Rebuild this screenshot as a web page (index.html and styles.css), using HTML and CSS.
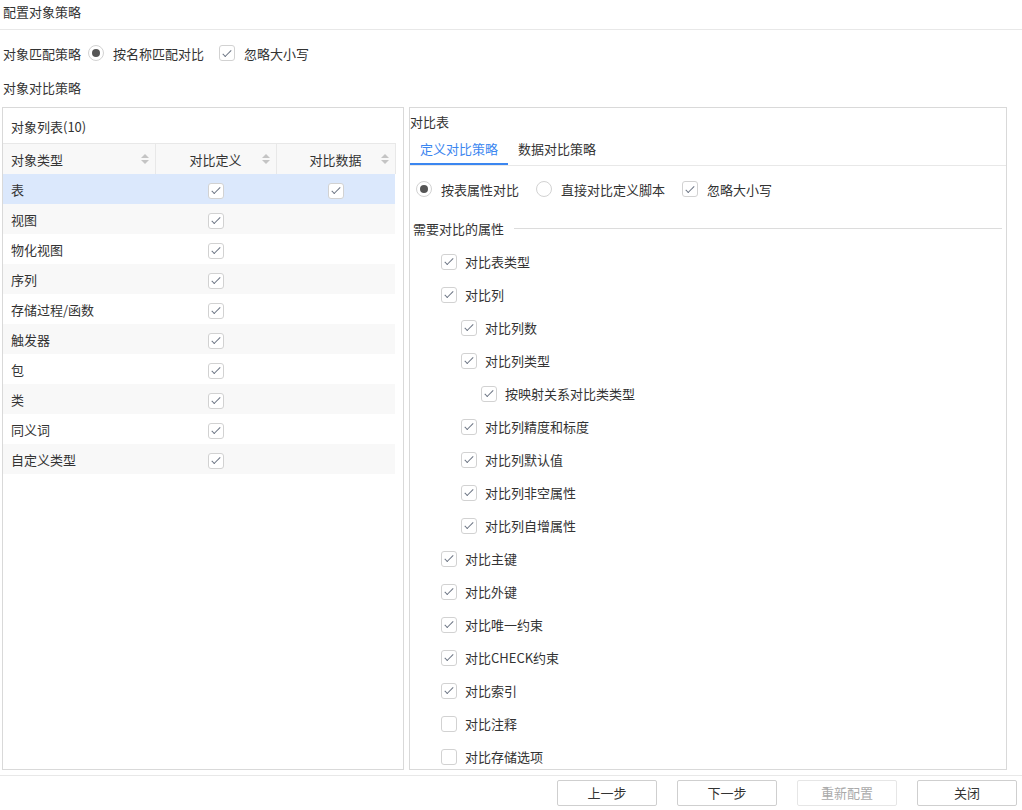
FILE: index.html
```html
<!DOCTYPE html>
<html lang="zh-CN">
<head>
    <meta charset="UTF-8">
    <meta name="viewport" content="width=device-width, initial-scale=1.0">
    <title>配置对象策略</title>
    <link rel="stylesheet" href="styles.css">
</head>
<body>

    <div class="page">
        <div class="page-title">配置对象策略</div>

        <!-- 对象匹配策略 -->
        <div class="match-row">
            <span class="field-label">对象匹配策略</span>
            <label class="option"><span class="radio checked"></span>按名称匹配对比</label>
            <label class="option"><span class="checkbox checked"></span>忽略大小写</label>
        </div>

        <div class="section-label">对象对比策略</div>

        <div class="panels">
            <!-- 左侧：对象列表 -->
            <div class="panel object-panel">
                <div class="panel-title">对象列表(10)</div>
                <table class="object-table">
                    <colgroup>
                        <col style="width:152px">
                        <col style="width:121px">
                        <col style="width:119px">
                    </colgroup>
                    <thead>
                        <tr>
                            <th><div class="th-left">对象类型<span class="sort"></span></div></th>
                            <th><div class="th-center"><span class="th-text">对比定义</span><span class="sort"></span></div></th>
                            <th><div class="th-center"><span class="th-text">对比数据</span><span class="sort"></span></div></th>
                        </tr>
                    </thead>
                    <tbody>
                        <tr class="selected">
                            <td>表</td>
                            <td><span class="checkbox checked"></span></td>
                            <td><span class="checkbox checked"></span></td>
                        </tr>
                        <tr><td>视图</td><td><span class="checkbox checked"></span></td><td></td></tr>
                        <tr><td>物化视图</td><td><span class="checkbox checked"></span></td><td></td></tr>
                        <tr><td>序列</td><td><span class="checkbox checked"></span></td><td></td></tr>
                        <tr><td>存储过程/函数</td><td><span class="checkbox checked"></span></td><td></td></tr>
                        <tr><td>触发器</td><td><span class="checkbox checked"></span></td><td></td></tr>
                        <tr><td>包</td><td><span class="checkbox checked"></span></td><td></td></tr>
                        <tr><td>类</td><td><span class="checkbox checked"></span></td><td></td></tr>
                        <tr><td>同义词</td><td><span class="checkbox checked"></span></td><td></td></tr>
                        <tr><td>自定义类型</td><td><span class="checkbox checked"></span></td><td></td></tr>
                    </tbody>
                </table>
            </div>

            <!-- 右侧：对比表 -->
            <div class="panel compare-panel">
                <div class="compare-title">对比表</div>
                <div class="tabs">
                    <span class="tab active">定义对比策略</span>
                    <span class="tab">数据对比策略</span>
                </div>

                <div class="option-row">
                    <label class="option"><span class="radio checked"></span>按表属性对比</label>
                    <label class="option"><span class="radio"></span>直接对比定义脚本</label>
                    <label class="option"><span class="checkbox checked"></span>忽略大小写</label>
                </div>

                <div class="group-title">
                    <span>需要对比的属性</span>
                    <span class="group-line"></span>
                </div>

                <ul class="attr-list">
                    <li class="level-0"><span class="checkbox checked"></span>对比表类型</li>
                    <li class="level-0"><span class="checkbox checked"></span>对比列</li>
                    <li class="level-1"><span class="checkbox checked"></span>对比列数</li>
                    <li class="level-1"><span class="checkbox checked"></span>对比列类型</li>
                    <li class="level-2"><span class="checkbox checked"></span>按映射关系对比类类型</li>
                    <li class="level-1"><span class="checkbox checked"></span>对比列精度和标度</li>
                    <li class="level-1"><span class="checkbox checked"></span>对比列默认值</li>
                    <li class="level-1"><span class="checkbox checked"></span>对比列非空属性</li>
                    <li class="level-1"><span class="checkbox checked"></span>对比列自增属性</li>
                    <li class="level-0"><span class="checkbox checked"></span>对比主键</li>
                    <li class="level-0"><span class="checkbox checked"></span>对比外键</li>
                    <li class="level-0"><span class="checkbox checked"></span>对比唯一约束</li>
                    <li class="level-0"><span class="checkbox checked"></span>对比CHECK约束</li>
                    <li class="level-0"><span class="checkbox checked"></span>对比索引</li>
                    <li class="level-0"><span class="checkbox"></span>对比注释</li>
                    <li class="level-0"><span class="checkbox"></span>对比存储选项</li>
                </ul>
            </div>
        </div>

        <!-- 底部按钮 -->
        <div class="footer">
            <button class="btn">上一步</button>
            <button class="btn">下一步</button>
            <button class="btn" disabled>重新配置</button>
            <button class="btn">关闭</button>
        </div>
    </div>

</body>
</html>
```

FILE: styles.css
```css
body {
    margin: 0;
    font-family: "Noto Sans CJK SC", "Noto Sans", sans-serif;
    font-size: 13px;
    color: #333;
    background-color: #fff;
    overflow: hidden;
}

.page {
    width: 1022px;
}

.page-title {
    height: 29px;
    line-height: 24px;
    padding-left: 3px;
    border-bottom: 1px solid #e8e8e8;
}

/* 单选框 / 复选框 */
.radio,
.checkbox {
    box-sizing: border-box;
    width: 16px;
    height: 16px;
    flex: none;
    display: inline-flex;
    align-items: center;
    justify-content: center;
    vertical-align: middle;
    background-color: #fff;
    border: 1px solid #d2d2d2;
}

.radio {
    border-radius: 50%;
}

.radio.checked::after {
    content: "";
    width: 8px;
    height: 8px;
    border-radius: 50%;
    background-color: #555;
}

.checkbox {
    border-radius: 3px;
}

.checkbox.checked::after {
    content: "";
    width: 3px;
    height: 8px;
    border-right: 1px solid #6a7382;
    border-bottom: 1px solid #6a7382;
    transform: translate(0, -1px) rotate(45deg);
}

.option {
    display: inline-flex;
    align-items: center;
    gap: 9px;
    margin-right: 15px;
}

.match-row {
    display: flex;
    align-items: center;
    height: 24px;
    margin-top: 11px;
    padding-left: 3px;
}

.field-label {
    margin-right: 7px;
}

.section-label {
    height: 24px;
    line-height: 24px;
    margin-top: 11px;
    padding-left: 3px;
}

/* 两个面板 */
.panels {
    display: flex;
    gap: 5px;
    height: 663px;
    margin-top: 7px;
    padding-left: 2px;
}

.panel {
    box-sizing: border-box;
    height: 100%;
    border: 1px solid #d9d9d9;
    overflow: hidden;
}

.object-panel {
    width: 402px;
}

.compare-panel {
    width: 598px;
}

.panel-title {
    height: 24px;
    line-height: 24px;
    padding: 7px 0 4px 8px;
}

/* 对象列表 */
.object-table {
    width: 392px;
    border-collapse: collapse;
    table-layout: fixed;
    border-top: 1px solid #e8e8e8;
}

.object-table th {
    height: 30px;
    padding: 0;
    font-weight: normal;
    background-color: #f8f8f8;
    border-right: 1px solid #e8e8e8;
}

.th-left {
    display: flex;
    align-items: center;
    justify-content: space-between;
    padding: 0 6px 0 8px;
}

.th-center {
    display: grid;
    grid-template-columns: 1fr auto 1fr;
    align-items: center;
    padding: 0 6px;
}

.th-center .th-text {
    grid-column: 2;
}

.th-center .sort {
    grid-column: 3;
    justify-self: end;
}

.sort {
    display: inline-flex;
    flex-direction: column;
    gap: 2px;
}

.sort::before,
.sort::after {
    content: "";
    border-left: 4px solid transparent;
    border-right: 4px solid transparent;
}

.sort::before {
    border-bottom: 4px solid #c4c4c4;
}

.sort::after {
    border-top: 4px solid #c4c4c4;
}

.object-table td {
    height: 30px;
    padding: 0;
    text-align: center;
}

.object-table td:first-child {
    padding-left: 8px;
    text-align: left;
}

.object-table tbody tr:nth-child(even) {
    background-color: #f8f8f8;
}

.object-table tbody tr.selected {
    background-color: #dbe8fc;
}

/* 对比表 */
.compare-title {
    height: 24px;
    line-height: 24px;
    margin-top: 2px;
}

.tabs {
    display: flex;
    border-bottom: 1px solid #e8e8e8;
}

.tab {
    height: 29px;
    line-height: 29px;
    padding: 0 10px;
    border-bottom: 2px solid transparent;
}

.tab.active {
    color: #3b86f0;
    border-bottom-color: #3b86f0;
}

.option-row {
    display: flex;
    align-items: center;
    height: 24px;
    margin-top: 11px;
    padding-left: 6px;
}

.option-row .option {
    margin-right: 17px;
}

.group-title {
    display: flex;
    align-items: center;
    height: 24px;
    margin-top: 15px;
    padding-left: 3px;
}

.group-line {
    flex: 1;
    height: 1px;
    margin: 0 4px 0 10px;
    background-color: #dcdcdc;
}

.attr-list {
    list-style: none;
    margin: 5px 0 0;
    padding: 0;
}

.attr-list li {
    display: flex;
    align-items: center;
    gap: 8px;
    height: 33px;
}

.attr-list .level-0 {
    padding-left: 31px;
}

.attr-list .level-1 {
    padding-left: 51px;
}

.attr-list .level-2 {
    padding-left: 71px;
}

/* 底部 */
.footer {
    display: flex;
    justify-content: flex-end;
    gap: 20px;
    margin-top: 5px;
    padding: 4px 5px 0 0;
    border-top: 1px solid #e8e8e8;
}

.btn {
    width: 100px;
    height: 26px;
    padding: 0 0 2px;
    font-family: inherit;
    font-size: 13px;
    color: #333;
    background-color: #fff;
    border: 1px solid #cfcfcf;
    border-radius: 2px;
    cursor: pointer;
}

.btn:disabled {
    color: #aaa;
    border-color: #e6e6e6;
    cursor: default;
}
```
